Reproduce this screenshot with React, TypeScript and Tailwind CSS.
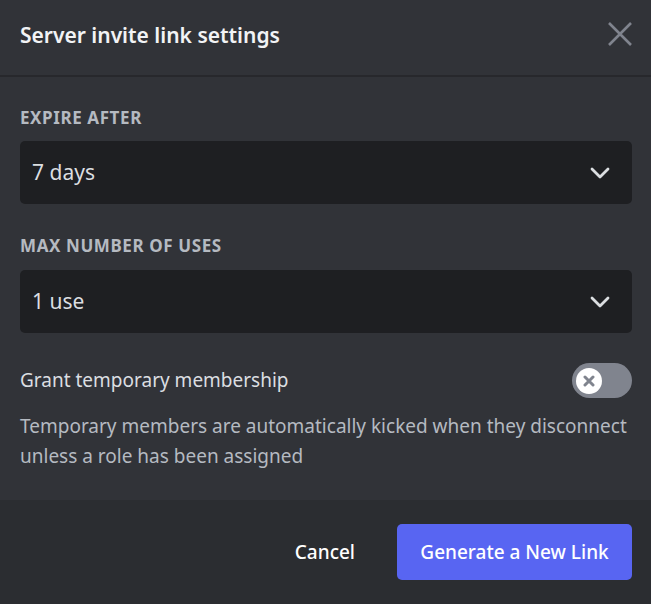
import { useState } from "react";

const font = { fontFamily: '"Noto Sans", "Liberation Sans", sans-serif' };

function Chevron() {
  return (
    <svg width="20" height="12" viewBox="0 0 20 12" fill="none">
      <path
        d="M2 2 L10 10 L18 2"
        stroke="#dbdee1"
        strokeWidth="2.8"
        strokeLinecap="round"
        strokeLinejoin="round"
      />
    </svg>
  );
}

function SelectBox({ value }: { value: string }) {
  return (
    <div className="h-[63px] rounded-[5px] bg-[#1e1f22] flex items-center justify-between pl-[12px] pr-[22px]">
      <span className="text-[21px] text-[#dbdee1]">{value}</span>
      <Chevron />
    </div>
  );
}

export default function App() {
  const [on, setOn] = useState(false);

  return (
    <div
      className="w-[651px] h-[604px] bg-[#313338] flex flex-col overflow-hidden"
      style={font}
    >
      {/* Header */}
      <div className="h-[77px] shrink-0 flex items-center justify-between pl-5 pr-[17px] border-b-2 border-[#27282c]">
        <h2 className="text-[21px] font-semibold text-[#f2f3f5] -mt-1">
          Server invite link settings
        </h2>
        <button className="w-7 h-7 flex items-center justify-center -mt-2">
          <svg width="26" height="26" viewBox="0 0 26 26">
            <path
              d="M2 2 L24 24 M24 2 L2 24"
              stroke="#80848e"
              strokeWidth="2.6"
            />
          </svg>
        </button>
      </div>

      {/* Body */}
      <div className="flex-1 pl-5 pr-[19px] pt-[31px]">
        <div className="h-5 leading-5 text-[17px] font-bold tracking-[0.035em] text-[#b5bac1] uppercase mb-[13px]">
          Expire after
        </div>
        <SelectBox value="7 days" />

        <div className="h-5 leading-5 text-[17px] font-bold tracking-[0.035em] text-[#b5bac1] uppercase mt-[32px] mb-[14px]">
          Max number of uses
        </div>
        <SelectBox value="1 use" />

        <div className="flex items-center justify-between mt-[30px]">
          <span className="text-[19px] text-[#dbdee1]">
            Grant temporary membership
          </span>
          <button
            onClick={() => setOn(!on)}
            className="w-[60px] h-[35px] rounded-full bg-[#80848e] flex items-center px-[4px]"
          >
            <span className="w-[26px] h-[26px] rounded-full bg-white flex items-center justify-center">
              <svg width="12" height="12" viewBox="0 0 12 12">
                <path
                  d="M2 2 L10 10 M10 2 L2 10"
                  stroke="#80848e"
                  strokeWidth="3"
                  strokeLinecap="round"
                />
              </svg>
            </span>
          </button>
        </div>

        <p className="mt-[13px] text-[19px] leading-[30px] text-[#b5bac1]">
          Temporary members are automatically kicked when they disconnect
          unless a role has been assigned
        </p>
      </div>

      {/* Footer */}
      <div className="h-[104px] shrink-0 bg-[#2b2d31] flex items-center justify-end pr-[19px] gap-[10px]">
        <button className="h-[56px] px-8 text-[19px] font-medium text-white">
          Cancel
        </button>
        <button className="h-[56px] w-[235px] rounded-[5px] bg-[#5865f2] text-[19px] font-medium text-white">
          Generate a New Link
        </button>
      </div>
    </div>
  );
}
